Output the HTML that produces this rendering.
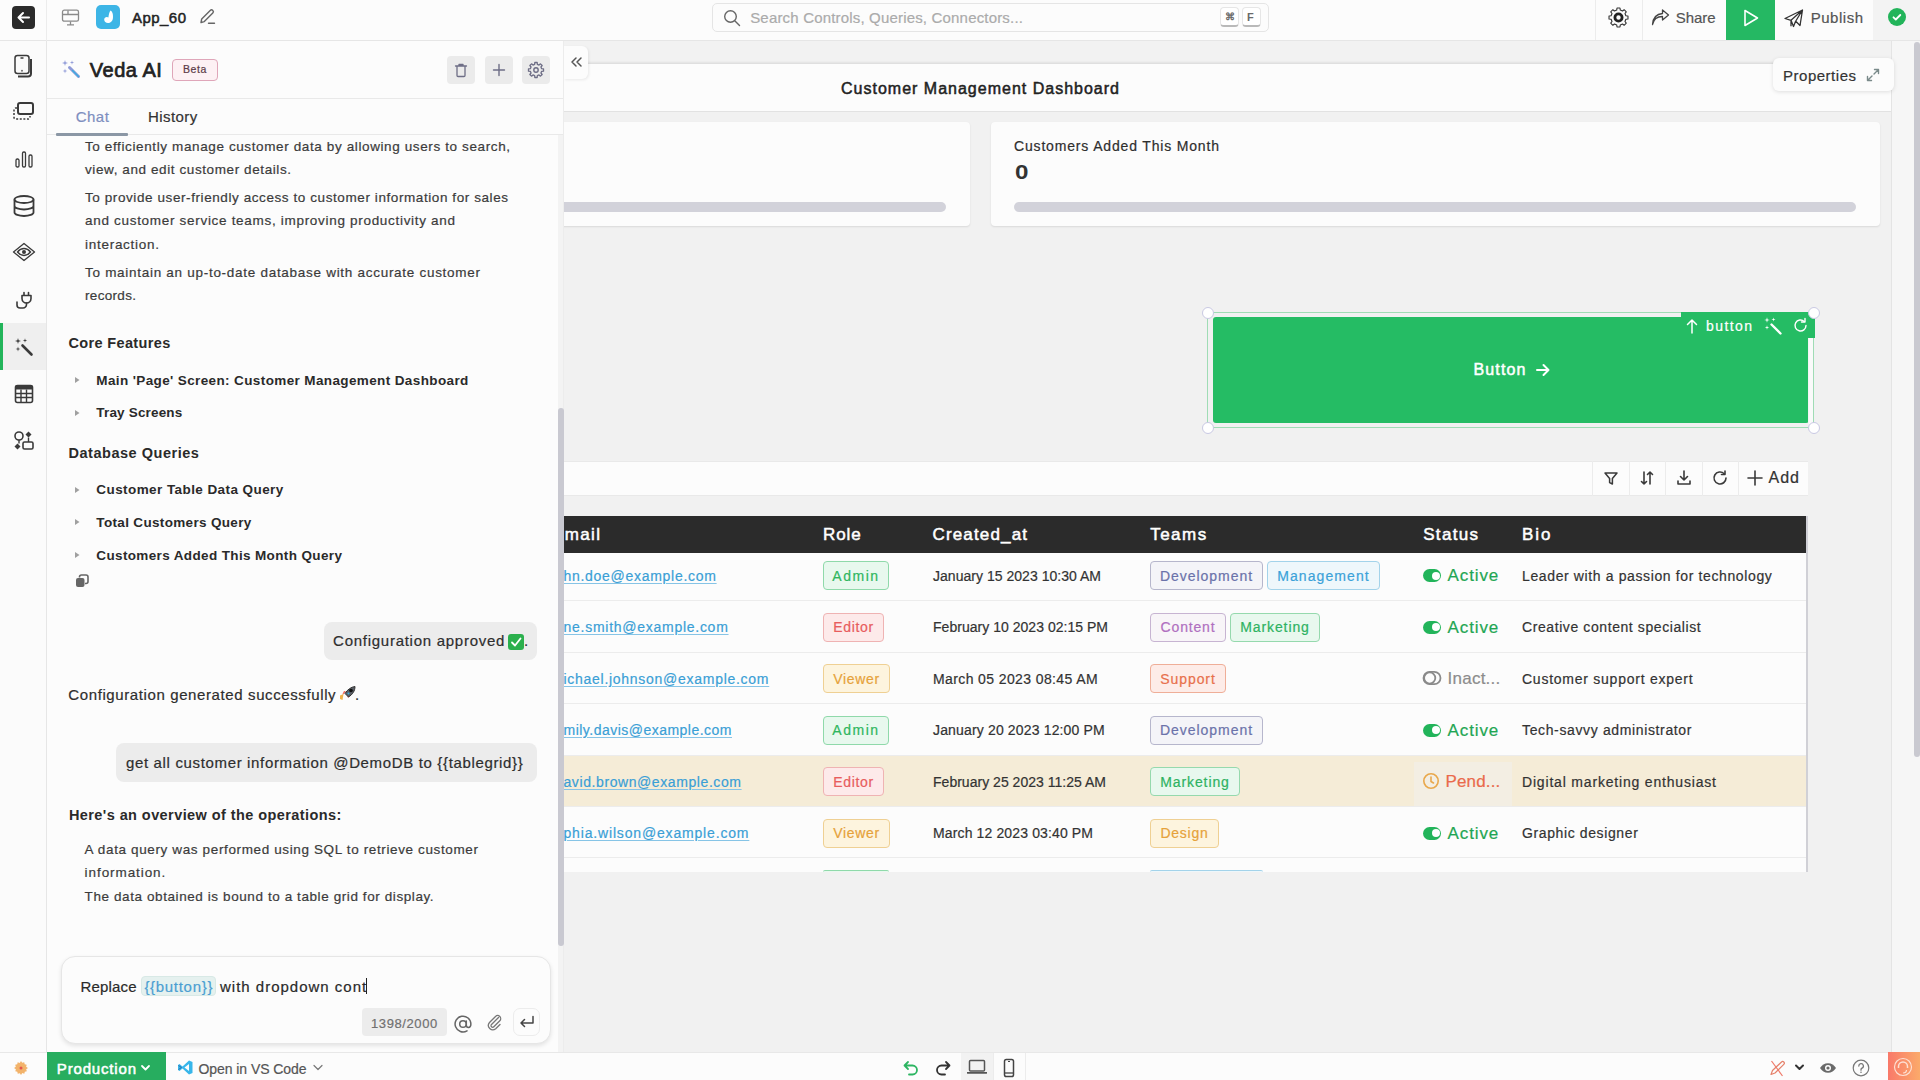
<!DOCTYPE html>
<html><head><meta charset="utf-8"><style>
*{box-sizing:border-box;margin:0;padding:0}
html,body{width:1920px;height:1080px;overflow:hidden;background:#f2f2f2;font-family:"Liberation Sans", sans-serif}
.t{position:absolute;line-height:1;white-space:nowrap}
.s{-webkit-text-stroke:0.2px currentColor}
.s5{-webkit-text-stroke:0.5px currentColor}
.s6{-webkit-text-stroke:0.7px currentColor}
.r{position:absolute}
</style></head><body>
<div class="r" style="left:440px;top:40px;width:1480px;height:1012px;background:#f2f2f2"></div><div class="r" style="left:440px;top:63.5px;width:1451px;height:989px;background:#f1f1f1;box-shadow:0 -1px 3px rgba(0,0,0,0.13)"></div><div class="r" style="left:440px;top:63.5px;width:1451px;height:48.5px;background:#fcfcfc;border-bottom:1px solid #e2e2e2"></div><div class="t s5" style="left:841px;top:80.66px;font-size:16px;font-weight:400;color:#222;letter-spacing:1.003px;">Customer Management Dashboard</div><div class="r" style="left:1891px;top:40px;width:29px;height:1012px;background:#f6f6f6;border-left:1px solid #e4e4e4"></div><div class="r" style="left:1914px;top:42px;width:6px;height:715px;background:#c9c9d0;border-radius:3px"></div><div class="r" style="left:440px;top:122px;width:530px;height:104px;background:#fcfcfc;border-radius:4px;box-shadow:0 1px 2px rgba(0,0,0,0.10)"></div><div class="r" style="left:440px;top:202px;width:506px;height:10px;background:#d2d2da;border-radius:5px"></div><div class="r" style="left:991px;top:122px;width:889px;height:104px;background:#fcfcfc;border-radius:4px;box-shadow:0 1px 2px rgba(0,0,0,0.10)"></div><div class="t s" style="left:1014px;top:138.75px;font-size:14px;font-weight:400;color:#2e2e2e;letter-spacing:0.833px;">Customers Added This Month</div><div class="t " style="left:1014.5px;top:162.05px;font-size:20.5px;font-weight:700;color:#333;letter-spacing:0px;transform:scaleX(1.18);transform-origin:0 0">0</div><div class="r" style="left:1014px;top:202px;width:842px;height:10px;background:#d2d2da;border-radius:5px"></div><div class="r" style="left:1207px;top:312px;width:607px;height:116px;border:1px solid #9fdcb5"></div><div class="r" style="left:1213px;top:317px;width:596px;height:106px;background:#25bc64;border-radius:3px"></div><div class="r" style="left:1681px;top:312px;width:134px;height:26px;background:#25bc64"></div><div class="r" style="left:1808px;top:338px;width:6px;height:86px;background:#f4f4f4"></div><div class="r" style="left:1809px;top:338px;width:5px;height:86px;background:#fafafa;border-right:1px solid #9fdcb5"></div><div class="t s5" style="left:1473.5px;top:362.06px;font-size:16px;font-weight:400;color:#fff;letter-spacing:1.148px;">Button</div><svg class="r" style="left:1535px;top:362px;" width="16" height="16" viewBox="0 0 16 16" fill="none"><path d="M2 8h11.5M8.5 3l5 5-5 5" stroke="#fff" stroke-width="2" stroke-linecap="round" stroke-linejoin="round"/></svg><svg class="r" style="left:1686px;top:318px;" width="12" height="16" viewBox="0 0 12 16" fill="none"><path d="M6 15V2M1.5 6.5L6 2l4.5 4.5" stroke="#fff" stroke-width="1.5" stroke-linecap="round" stroke-linejoin="round"/></svg><div class="t s" style="left:1706px;top:318.65px;font-size:14px;font-weight:400;color:#fff;letter-spacing:1.415px;">button</div><svg class="r" style="left:1763px;top:316px;" width="20" height="20" viewBox="0 0 20 20" fill="none"><path d="M8.5 8.5l9 9" stroke="#fff" stroke-width="2.4" stroke-linecap="round"/><path d="M4 1.2000000000000002L4.616 3.384L6.8 4L4.616 4.616L4 6.8L3.384 4.616L1.2000000000000002 4L3.384 3.384ZM10.5 1.5L10.94 3.06L12.5 3.5L10.94 3.94L10.5 5.5L10.06 3.94L8.5 3.5L10.06 3.06ZM4 9.3L4.484 11.016L6.2 11.5L4.484 11.984L4 13.7L3.516 11.984L1.7999999999999998 11.5L3.516 11.016Z" fill="#fff"/></svg><svg class="r" style="left:1792px;top:317px;" width="17" height="17" viewBox="0 0 17 17" fill="none"><path d="M14 8.5A5.5 5.5 0 1 1 12.2 4.4" stroke="#fff" stroke-width="1.4" stroke-linecap="round"/><path d="M13 1.5v3.5h-3.5" stroke="#fff" stroke-width="1.4" stroke-linecap="round" stroke-linejoin="round"/></svg><div class="r" style="left:1201.5px;top:306.5px;width:12px;height:12px;background:#fff;border:1px solid #c9c9e3;border-radius:50%"></div><div class="r" style="left:1201.5px;top:421.5px;width:12px;height:12px;background:#fff;border:1px solid #c9c9e3;border-radius:50%"></div><div class="r" style="left:1808px;top:306.5px;width:12px;height:12px;background:#fff;border:1px solid #c9c9e3;border-radius:50%"></div><div class="r" style="left:1808px;top:421.5px;width:12px;height:12px;background:#fff;border:1px solid #c9c9e3;border-radius:50%"></div><div class="r" style="left:440px;top:461px;width:1368px;height:35px;background:#fcfcfc;border-top:1px solid #e9e9e9;border-bottom:1px solid #e9e9e9"></div><div class="r" style="left:1592px;top:461px;width:1px;height:35px;background:#ececec"></div><div class="r" style="left:1629px;top:461px;width:1px;height:35px;background:#ececec"></div><div class="r" style="left:1665px;top:461px;width:1px;height:35px;background:#ececec"></div><div class="r" style="left:1702px;top:461px;width:1px;height:35px;background:#ececec"></div><div class="r" style="left:1738px;top:461px;width:1px;height:35px;background:#ececec"></div><svg class="r" style="left:1602px;top:469px;" width="18" height="18" viewBox="0 0 18 18" fill="none"><path d="M3 4h12l-4.6 5.6V15l-2.8-1.4V9.6z" stroke="#3a3a3a" stroke-width="1.5" stroke-linejoin="round"/></svg><svg class="r" style="left:1638px;top:469px;" width="18" height="18" viewBox="0 0 18 18" fill="none"><path d="M6 3v12M3.5 12.5L6 15l2.5-2.5M12 15V3M9.5 5.5L12 3l2.5 2.5" stroke="#3a3a3a" stroke-width="1.6" stroke-linecap="round" stroke-linejoin="round"/></svg><svg class="r" style="left:1675px;top:469px;" width="18" height="18" viewBox="0 0 18 18" fill="none"><path d="M9 2v9M5.5 7.5L9 11l3.5-3.5M3 12v3h12v-3" stroke="#3a3a3a" stroke-width="1.6" stroke-linecap="round" stroke-linejoin="round"/></svg><svg class="r" style="left:1711px;top:469px;" width="18" height="18" viewBox="0 0 18 18" fill="none"><path d="M15 9a6 6 0 1 1-1.8-4.3" stroke="#3a3a3a" stroke-width="1.6" stroke-linecap="round"/><path d="M14 2v3.5h-3.5" stroke="#3a3a3a" stroke-width="1.6" stroke-linecap="round" stroke-linejoin="round"/></svg><svg class="r" style="left:1746px;top:469px;" width="18" height="18" viewBox="0 0 18 18" fill="none"><path d="M9 2v14M2 9h14" stroke="#3a3a3a" stroke-width="1.6" stroke-linecap="round"/></svg><div class="t s" style="left:1768.5px;top:470.46px;font-size:16px;font-weight:400;color:#333;letter-spacing:1.016px;">Add</div><div class="r" style="left:440px;top:516px;width:1368px;height:356px;background:#fcfcfc"></div><div class="r" style="left:440px;top:516px;width:1366px;height:37px;background:#2b2b2b"></div><div class="r" style="left:1806px;top:516px;width:2px;height:356px;background:#d0d0d6"></div><div class="t s5" style="left:552px;top:526.41px;font-size:17px;font-weight:400;color:#fff;letter-spacing:1.373px;">Email</div><div class="t s5" style="left:823px;top:526.41px;font-size:17px;font-weight:400;color:#fff;letter-spacing:0.946px;">Role</div><div class="t s5" style="left:932.5px;top:526.41px;font-size:17px;font-weight:400;color:#fff;letter-spacing:1.154px;">Created_at</div><div class="t s5" style="left:1150.2px;top:526.41px;font-size:17px;font-weight:400;color:#fff;letter-spacing:1.482px;">Teams</div><div class="t s5" style="left:1423.2px;top:526.41px;font-size:17px;font-weight:400;color:#fff;letter-spacing:1.321px;">Status</div><div class="t s5" style="left:1522px;top:526.41px;font-size:17px;font-weight:400;color:#fff;letter-spacing:1.915px;">Bio</div><div class="r" style="left:440px;top:600.4px;width:1366px;height:1px;background:#ececec"></div><div class="t s" style="left:563.5px;top:568.95px;font-size:14px;font-weight:400;color:#3a9fd6;letter-spacing:0.713px;text-decoration:underline;text-underline-offset:2px;text-decoration-color:#86c4e6">hn.doe@example.com</div><div class="r" style="left:823px;top:561.3px;width:66px;height:29px;background:#e8f8ee;border:1px solid #8fd9aa;border-radius:4px"></div><div class="t s" style="left:823px;top:568.95px;font-size:14px;font-weight:400;color:#2fb65e;letter-spacing:1.529px;width:66px;text-align:center">Admin</div><div class="t s" style="left:933px;top:568.95px;font-size:14px;font-weight:400;color:#333;letter-spacing:0.029px;">January 15 2023 10:30 AM</div><div class="r" style="left:1150px;top:561.3px;width:113px;height:29px;background:#f4f4f8;border:1px solid #b6b6cc;border-radius:4px"></div><div class="t s" style="left:1150px;top:568.95px;font-size:14px;font-weight:400;color:#6b72aa;letter-spacing:0.951px;width:113px;text-align:center">Development</div><div class="r" style="left:1267px;top:561.3px;width:113px;height:29px;background:#eef7fb;border:1px solid #a3d3ea;border-radius:4px"></div><div class="t s" style="left:1267px;top:568.95px;font-size:14px;font-weight:400;color:#3ba2d9;letter-spacing:1.087px;width:113px;text-align:center">Management</div><div class="r" style="left:1423px;top:569.3px;width:18px;height:13px;background:#22b45a;border-radius:7px"></div><div class="r" style="left:1432px;top:571.8px;width:8px;height:8px;background:#fff;border-radius:50%"></div><div class="t s" style="left:1447.5px;top:567.41px;font-size:17px;font-weight:400;color:#1fa653;letter-spacing:0.901px;">Active</div><div class="t s" style="left:1522px;top:568.95px;font-size:14px;font-weight:400;color:#333;letter-spacing:0.622px;">Leader with a passion for technology</div><div class="r" style="left:440px;top:651.8px;width:1366px;height:1px;background:#ececec"></div><div class="t s" style="left:563.5px;top:620.15px;font-size:14px;font-weight:400;color:#3a9fd6;letter-spacing:0.733px;text-decoration:underline;text-underline-offset:2px;text-decoration-color:#86c4e6">ne.smith@example.com</div><div class="r" style="left:823px;top:612.5px;width:61px;height:29px;background:#fdeaea;border:1px solid #efb3b3;border-radius:4px"></div><div class="t s" style="left:823px;top:620.15px;font-size:14px;font-weight:400;color:#e85d5d;letter-spacing:0.645px;width:61px;text-align:center">Editor</div><div class="t s" style="left:933px;top:620.15px;font-size:14px;font-weight:400;color:#333;letter-spacing:0.028px;">February 10 2023 02:15 PM</div><div class="r" style="left:1150px;top:612.5px;width:76px;height:29px;background:#f8f5f8;border:1px solid #c7b4d2;border-radius:4px"></div><div class="t s" style="left:1150px;top:620.15px;font-size:14px;font-weight:400;color:#b06fc0;letter-spacing:0.828px;width:76px;text-align:center">Content</div><div class="r" style="left:1230px;top:612.5px;width:90px;height:29px;background:#e8f8ee;border:1px solid #95d9ad;border-radius:4px"></div><div class="t s" style="left:1230px;top:620.15px;font-size:14px;font-weight:400;color:#2eb262;letter-spacing:0.904px;width:90px;text-align:center">Marketing</div><div class="r" style="left:1423px;top:620.5px;width:18px;height:13px;background:#22b45a;border-radius:7px"></div><div class="r" style="left:1432px;top:623.0px;width:8px;height:8px;background:#fff;border-radius:50%"></div><div class="t s" style="left:1447.5px;top:618.61px;font-size:17px;font-weight:400;color:#1fa653;letter-spacing:0.901px;">Active</div><div class="t s" style="left:1522px;top:620.15px;font-size:14px;font-weight:400;color:#333;letter-spacing:0.588px;">Creative content specialist</div><div class="r" style="left:440px;top:703.2px;width:1366px;height:1px;background:#ececec"></div><div class="t s" style="left:563.5px;top:671.65px;font-size:14px;font-weight:400;color:#3a9fd6;letter-spacing:0.721px;text-decoration:underline;text-underline-offset:2px;text-decoration-color:#86c4e6">ichael.johnson@example.com</div><div class="r" style="left:823px;top:664.0px;width:67px;height:29px;background:#fdf4de;border:1px solid #efd093;border-radius:4px"></div><div class="t s" style="left:823px;top:671.65px;font-size:14px;font-weight:400;color:#e6a23a;letter-spacing:0.692px;width:67px;text-align:center">Viewer</div><div class="t s" style="left:933px;top:671.65px;font-size:14px;font-weight:400;color:#333;letter-spacing:0.389px;">March 05 2023 08:45 AM</div><div class="r" style="left:1150px;top:664.0px;width:76px;height:29px;background:#fdece8;border:1px solid #efae98;border-radius:4px"></div><div class="t s" style="left:1150px;top:671.65px;font-size:14px;font-weight:400;color:#e8704c;letter-spacing:0.928px;width:76px;text-align:center">Support</div><svg class="r" style="left:1422px;top:669.5px;" width="20" height="16" viewBox="0 0 20 16" fill="none"><rect x="1.5" y="1.8" width="17" height="12.4" rx="6.2" stroke="#8a8a8a" stroke-width="1.8"/><circle cx="7.7" cy="8" r="5.6" stroke="#8a8a8a" stroke-width="1.8"/></svg><div class="t s" style="left:1447.5px;top:670.11px;font-size:17px;font-weight:400;color:#8c8c8c;letter-spacing:0.253px;">Inact...</div><div class="t s" style="left:1522px;top:671.65px;font-size:14px;font-weight:400;color:#333;letter-spacing:0.751px;">Customer support expert</div><div class="r" style="left:440px;top:754.6px;width:1366px;height:1px;background:#ececec"></div><div class="t s" style="left:563.5px;top:723.15px;font-size:14px;font-weight:400;color:#3a9fd6;letter-spacing:0.482px;text-decoration:underline;text-underline-offset:2px;text-decoration-color:#86c4e6">mily.davis@example.com</div><div class="r" style="left:823px;top:715.5px;width:66px;height:29px;background:#e8f8ee;border:1px solid #8fd9aa;border-radius:4px"></div><div class="t s" style="left:823px;top:723.15px;font-size:14px;font-weight:400;color:#2fb65e;letter-spacing:1.529px;width:66px;text-align:center">Admin</div><div class="t s" style="left:933px;top:723.15px;font-size:14px;font-weight:400;color:#333;letter-spacing:0.156px;">January 20 2023 12:00 PM</div><div class="r" style="left:1150px;top:715.5px;width:113px;height:29px;background:#f4f4f8;border:1px solid #b6b6cc;border-radius:4px"></div><div class="t s" style="left:1150px;top:723.15px;font-size:14px;font-weight:400;color:#6b72aa;letter-spacing:0.951px;width:113px;text-align:center">Development</div><div class="r" style="left:1423px;top:723.5px;width:18px;height:13px;background:#22b45a;border-radius:7px"></div><div class="r" style="left:1432px;top:726.0px;width:8px;height:8px;background:#fff;border-radius:50%"></div><div class="t s" style="left:1447.5px;top:721.61px;font-size:17px;font-weight:400;color:#1fa653;letter-spacing:0.901px;">Active</div><div class="t s" style="left:1522px;top:723.15px;font-size:14px;font-weight:400;color:#333;letter-spacing:0.634px;">Tech-savvy administrator</div><div class="r" style="left:440px;top:755.6px;width:1366px;height:51.39999999999998px;background:#f5ecd7"></div><div class="r" style="left:1414px;top:761.6px;width:98px;height:45.39999999999998px;background:#f3eee3"></div><div class="r" style="left:440px;top:806.0px;width:1366px;height:1px;background:#ececec"></div><div class="t s" style="left:563.5px;top:774.55px;font-size:14px;font-weight:400;color:#3a9fd6;letter-spacing:0.587px;text-decoration:underline;text-underline-offset:2px;text-decoration-color:#86c4e6">avid.brown@example.com</div><div class="r" style="left:823px;top:766.9px;width:61px;height:29px;background:#fdeaea;border:1px solid #efb3b3;border-radius:4px"></div><div class="t s" style="left:823px;top:774.55px;font-size:14px;font-weight:400;color:#e85d5d;letter-spacing:0.645px;width:61px;text-align:center">Editor</div><div class="t s" style="left:933px;top:774.55px;font-size:14px;font-weight:400;color:#333;letter-spacing:0.02px;">February 25 2023 11:25 AM</div><div class="r" style="left:1150px;top:766.9px;width:90px;height:29px;background:#e8f8ee;border:1px solid #95d9ad;border-radius:4px"></div><div class="t s" style="left:1150px;top:774.55px;font-size:14px;font-weight:400;color:#2eb262;letter-spacing:0.904px;width:90px;text-align:center">Marketing</div><svg class="r" style="left:1422px;top:772.4px;" width="18" height="18" viewBox="0 0 18 18" fill="none"><circle cx="9" cy="9" r="7.2" stroke="#e9a84c" stroke-width="1.6"/><path d="M9 5v4.5l2.5 1.5" stroke="#e9a84c" stroke-width="1.6" stroke-linecap="round"/></svg><div class="t s" style="left:1445.5px;top:773.01px;font-size:17px;font-weight:400;color:#ea6a4c;letter-spacing:0.154px;">Pend...</div><div class="t s" style="left:1522px;top:774.55px;font-size:14px;font-weight:400;color:#333;letter-spacing:0.816px;">Digital marketing enthusiast</div><div class="r" style="left:440px;top:857.4px;width:1366px;height:1px;background:#ececec"></div><div class="t s" style="left:563.5px;top:826.15px;font-size:14px;font-weight:400;color:#3a9fd6;letter-spacing:0.831px;text-decoration:underline;text-underline-offset:2px;text-decoration-color:#86c4e6">phia.wilson@example.com</div><div class="r" style="left:823px;top:818.5px;width:67px;height:29px;background:#fdf4de;border:1px solid #efd093;border-radius:4px"></div><div class="t s" style="left:823px;top:826.15px;font-size:14px;font-weight:400;color:#e6a23a;letter-spacing:0.692px;width:67px;text-align:center">Viewer</div><div class="t s" style="left:933px;top:826.15px;font-size:14px;font-weight:400;color:#333;letter-spacing:0.133px;">March 12 2023 03:40 PM</div><div class="r" style="left:1150px;top:818.5px;width:69px;height:29px;background:#fdf4de;border:1px solid #efd093;border-radius:4px"></div><div class="t s" style="left:1150px;top:826.15px;font-size:14px;font-weight:400;color:#e6a23a;letter-spacing:0.744px;width:69px;text-align:center">Design</div><div class="r" style="left:1423px;top:826.5px;width:18px;height:13px;background:#22b45a;border-radius:7px"></div><div class="r" style="left:1432px;top:829.0px;width:8px;height:8px;background:#fff;border-radius:50%"></div><div class="t s" style="left:1447.5px;top:824.61px;font-size:17px;font-weight:400;color:#1fa653;letter-spacing:0.901px;">Active</div><div class="t s" style="left:1522px;top:826.15px;font-size:14px;font-weight:400;color:#333;letter-spacing:0.613px;">Graphic designer</div><div class="r" style="left:823px;top:870px;width:66px;height:2px;background:#e8f8ee;border-top:1px solid #8fd9aa;border-radius:4px 4px 0 0"></div><div class="r" style="left:1150px;top:870px;width:113px;height:2px;background:#eef7fb;border-top:1px solid #a3d3ea;border-radius:4px 4px 0 0"></div><div class="r" style="left:1773px;top:58px;width:121px;height:33px;background:#fcfcfc;border-radius:6px;box-shadow:0 1px 4px rgba(0,0,0,0.12)"></div><div class="t s" style="left:1783px;top:67.80px;font-size:15px;font-weight:400;color:#333;letter-spacing:0.515px;">Properties</div><svg class="r" style="left:1865px;top:67px;" width="16" height="16" viewBox="0 0 16 16" fill="none"><path d="M9.5 2.5h4v4M13.5 2.5L9 7M6.5 13.5h-4v-4M2.5 13.5L7 9" stroke="#7a8a8a" stroke-width="1.4" stroke-linecap="round" stroke-linejoin="round"/></svg><div class="r" style="left:564px;top:46px;width:24px;height:33px;background:#fcfcfc;border-radius:0 6px 6px 0;box-shadow:1px 1px 3px rgba(0,0,0,0.08)"></div><svg class="r" style="left:569px;top:55px;" width="14" height="14" viewBox="0 0 14 14" fill="none"><path d="M7 3L3 7l4 4M12 3L8 7l4 4" stroke="#555" stroke-width="1.5" stroke-linecap="round" stroke-linejoin="round"/></svg><div class="r" style="left:47px;top:41px;width:517px;height:1011px;background:#fcfcfc;border-right:1px solid #ececec"></div><div class="r" style="left:47px;top:98px;width:516px;height:1px;background:#e9e9e9"></div><div class="r" style="left:47px;top:134px;width:516px;height:1px;background:#e9e9e9"></div><div class="r" style="left:56px;top:133px;width:72px;height:3px;background:#8b97a5;border-radius:1px"></div><svg class="r" style="left:61px;top:59px;" width="20" height="20" viewBox="0 0 20 20" fill="none"><path d="M8.5 8.5l9 9" stroke="#8f9ad8" stroke-width="3" stroke-linecap="round"/><path d="M11.5 11.5l6 6" stroke="#3aaee0" stroke-width="1.4" stroke-linecap="round"/><path d="M4 1L4.66 3.34L7 4L4.66 4.66L4 7L3.34 4.66L1 4L3.34 3.34ZM11 1.2999999999999998L11.484 3.016L13.2 3.5L11.484 3.984L11 5.7L10.516 3.984L8.8 3.5L10.516 3.016ZM4 9.6L4.5280000000000005 11.472L6.4 12L4.5280000000000005 12.528L4 14.4L3.472 12.528L1.6 12L3.472 11.472Z" fill="#8f9ad8"/></svg><div class="t s6" style="left:89.8px;top:59.97px;font-size:20px;font-weight:400;color:#222;letter-spacing:0.507px;">Veda AI</div><div class="r" style="left:172px;top:59px;width:46px;height:22px;background:#fdf1f4;border:1px solid #dfa6b9;border-radius:4px"></div><div class="t s" style="left:172px;top:64.31px;font-size:10.5px;font-weight:400;color:#5b3b47;letter-spacing:0.633px;width:46px;text-align:center">Beta</div><div class="r" style="left:447px;top:56px;width:28px;height:28px;background:#ebebeb;border-radius:4px"></div><div class="r" style="left:485px;top:56px;width:28px;height:28px;background:#ebebeb;border-radius:4px"></div><div class="r" style="left:522px;top:56px;width:28px;height:28px;background:#ebebeb;border-radius:4px"></div><svg class="r" style="left:453px;top:62px;" width="16" height="16" viewBox="0 0 16 16" fill="none"><path d="M2.5 4h11M6 4V2.5h4V4M4 4v9.5a1 1 0 0 0 1 1h6a1 1 0 0 0 1-1V4" stroke="#6e6e86" stroke-width="1.3" stroke-linecap="round" stroke-linejoin="round"/></svg><svg class="r" style="left:491px;top:62px;" width="16" height="16" viewBox="0 0 16 16" fill="none"><path d="M8 2.5v11M2.5 8h11" stroke="#6e6e86" stroke-width="1.4" stroke-linecap="round"/></svg><svg class="r" style="left:527px;top:61px;" width="18" height="18" viewBox="0 0 18 18" fill="none"><path d="M7.65 3.36 L7.81 1.49 L10.19 1.49 L10.35 3.36 L12.03 4.05 L13.47 2.85 L15.15 4.53 L13.95 5.97 L14.64 7.65 L16.51 7.81 L16.51 10.19 L14.64 10.35 L13.95 12.03 L15.15 13.47 L13.47 15.15 L12.03 13.95 L10.35 14.64 L10.19 16.51 L7.81 16.51 L7.65 14.64 L5.97 13.95 L4.53 15.15 L2.85 13.47 L4.05 12.03 L3.36 10.35 L1.49 10.19 L1.49 7.81 L3.36 7.65 L4.05 5.97 L2.85 4.53 L4.53 2.85 L5.97 4.05Z" stroke="#6e6e86" stroke-width="1.3" stroke-linejoin="round"/><circle cx="9" cy="9" r="2.2" stroke="#6e6e86" stroke-width="1.4"/></svg><div class="t s" style="left:75.8px;top:109.10px;font-size:15px;font-weight:400;color:#7f8fbf;letter-spacing:0.439px;">Chat</div><div class="t s" style="left:148px;top:109.10px;font-size:15px;font-weight:400;color:#333;letter-spacing:0.438px;">History</div><div class="t s" style="left:85px;top:139.77px;font-size:13.5px;font-weight:400;color:#3b3b3b;letter-spacing:0.616px;">To efficiently manage customer data by allowing users to search,</div><div class="t s" style="left:85px;top:163.27px;font-size:13.5px;font-weight:400;color:#3b3b3b;letter-spacing:0.594px;">view, and edit customer details.</div><div class="t s" style="left:85px;top:190.87px;font-size:13.5px;font-weight:400;color:#3b3b3b;letter-spacing:0.584px;">To provide user-friendly access to customer information for sales</div><div class="t s" style="left:85px;top:214.37px;font-size:13.5px;font-weight:400;color:#3b3b3b;letter-spacing:0.696px;">and customer service teams, improving productivity and</div><div class="t s" style="left:85px;top:237.87px;font-size:13.5px;font-weight:400;color:#3b3b3b;letter-spacing:0.724px;">interaction.</div><div class="t s" style="left:85px;top:265.57px;font-size:13.5px;font-weight:400;color:#3b3b3b;letter-spacing:0.715px;">To maintain an up-to-date database with accurate customer</div><div class="t s" style="left:85px;top:289.07px;font-size:13.5px;font-weight:400;color:#3b3b3b;letter-spacing:0.319px;">records.</div><div class="t " style="left:68.5px;top:335.73px;font-size:14.5px;font-weight:700;color:#2a2a2a;letter-spacing:0.349px;">Core Features</div><div class="t " style="left:68.5px;top:445.53px;font-size:14.5px;font-weight:700;color:#2a2a2a;letter-spacing:0.526px;">Database Queries</div><svg class="r" style="left:74px;top:376.3px;" width="6" height="8" viewBox="0 0 6 8" fill="none"><path d="M1 1l4.5 3L1 7z" fill="#a0a0a0"/></svg><div class="t " style="left:96.3px;top:373.87px;font-size:13.5px;font-weight:700;color:#2a2a2a;letter-spacing:0.38px;">Main 'Page' Screen: Customer Management Dashboard</div><svg class="r" style="left:74px;top:408.9px;" width="6" height="8" viewBox="0 0 6 8" fill="none"><path d="M1 1l4.5 3L1 7z" fill="#a0a0a0"/></svg><div class="t " style="left:96.3px;top:406.47px;font-size:13.5px;font-weight:700;color:#2a2a2a;letter-spacing:0.177px;">Tray Screens</div><svg class="r" style="left:74px;top:485.7px;" width="6" height="8" viewBox="0 0 6 8" fill="none"><path d="M1 1l4.5 3L1 7z" fill="#a0a0a0"/></svg><div class="t " style="left:96.3px;top:483.27px;font-size:13.5px;font-weight:700;color:#2a2a2a;letter-spacing:0.425px;">Customer Table Data Query</div><svg class="r" style="left:74px;top:518.3px;" width="6" height="8" viewBox="0 0 6 8" fill="none"><path d="M1 1l4.5 3L1 7z" fill="#a0a0a0"/></svg><div class="t " style="left:96.3px;top:515.87px;font-size:13.5px;font-weight:700;color:#2a2a2a;letter-spacing:0.336px;">Total Customers Query</div><svg class="r" style="left:74px;top:551.4px;" width="6" height="8" viewBox="0 0 6 8" fill="none"><path d="M1 1l4.5 3L1 7z" fill="#a0a0a0"/></svg><div class="t " style="left:96.3px;top:548.97px;font-size:13.5px;font-weight:700;color:#2a2a2a;letter-spacing:0.366px;">Customers Added This Month Query</div><svg class="r" style="left:75px;top:574px;" width="14" height="14" viewBox="0 0 14 14" fill="none"><rect x="1" y="4" width="8.5" height="9" rx="2" fill="#666"/><path d="M4.5 3.5V3a2 2 0 0 1 2-2h4.5a2 2 0 0 1 2 2v4.5a2 2 0 0 1-2 2H10" stroke="#666" stroke-width="1.6"/></svg><div class="r" style="left:324px;top:622px;width:213px;height:38px;background:#ececec;border-radius:8px"></div><div class="t s" style="left:333.1px;top:633.30px;font-size:15px;font-weight:400;color:#2e2e2e;letter-spacing:0.731px;">Configuration approved</div><div class="r" style="left:508px;top:634px;width:16px;height:16px;background:#2bb04d;border-radius:3px"></div><svg class="r" style="left:508px;top:634px;" width="16" height="16" viewBox="0 0 16 16" fill="none"><path d="M4 8.5l3 3 5.5-7" stroke="#fff" stroke-width="1.8" stroke-linecap="round" stroke-linejoin="round"/></svg><div class="t s" style="left:524px;top:633.30px;font-size:15px;font-weight:400;color:#2e2e2e;letter-spacing:0px;">.</div><div class="t s" style="left:68.3px;top:686.80px;font-size:15px;font-weight:400;color:#2e2e2e;letter-spacing:0.609px;">Configuration generated successfully</div><svg class="r" style="left:339px;top:685px;" width="18" height="18" viewBox="0 0 18 18" fill="none"><path d="M1 10.5l3.5-1.5-1 6-2.5-1z" fill="#f0b14a"/><path d="M4 9.5L7 6.5 5 6 3.5 9z" fill="#f06050"/><path d="M8.5 11L11.5 8l.5 2-3 3z" fill="#f06050"/><path d="M16 1.5C12 2 8.5 4.5 6 8.5l3.5 3.5C13.5 9.5 16 6 16 1.5z" fill="#5a5f66" stroke="#333" stroke-width="1"/><circle cx="12" cy="5.5" r="1.8" fill="#111"/><circle cx="9.5" cy="8.5" r="1" fill="#3ab0e0"/></svg><div class="t s" style="left:355px;top:686.80px;font-size:15px;font-weight:400;color:#2e2e2e;letter-spacing:0px;">.</div><div class="r" style="left:116px;top:743px;width:421px;height:39px;background:#ececec;border-radius:8px"></div><div class="t s" style="left:126px;top:754.80px;font-size:15px;font-weight:400;color:#2e2e2e;letter-spacing:0.65px;">get all customer information @DemoDB to {{tablegrid}}</div><div class="t " style="left:68.9px;top:807.53px;font-size:14.5px;font-weight:700;color:#2a2a2a;letter-spacing:0.423px;">Here's an overview of the operations:</div><div class="t s" style="left:84.6px;top:843.17px;font-size:13.5px;font-weight:400;color:#3b3b3b;letter-spacing:0.629px;">A data query was performed using SQL to retrieve customer</div><div class="t s" style="left:84.6px;top:866.47px;font-size:13.5px;font-weight:400;color:#3b3b3b;letter-spacing:0.925px;">information.</div><div class="t s" style="left:84.6px;top:889.97px;font-size:13.5px;font-weight:400;color:#3b3b3b;letter-spacing:0.589px;">The data obtained is bound to a table grid for display.</div><div class="r" style="left:558px;top:135px;width:5px;height:917px;background:#f3f3f3"></div><div class="r" style="left:558px;top:408px;width:6px;height:538px;background:#c9c9d1;border-radius:3px"></div><div class="r" style="left:61px;top:956px;width:490px;height:88px;background:#fcfcfc;border:1px solid #e6e6e6;border-radius:14px;box-shadow:0 2px 4px rgba(0,0,0,0.10)"></div><div class="t s" style="left:80.4px;top:978.80px;font-size:15px;font-weight:400;color:#2a2a2a;letter-spacing:0.194px;">Replace</div><div class="r" style="left:141px;top:975.5px;width:75px;height:20px;background:#e5f1ef;border:1px solid #d8e9e6;border-radius:4px"></div><div class="t s" style="left:144.4px;top:978.80px;font-size:15px;font-weight:400;color:#4b9fd2;letter-spacing:0.695px;">{{button}}</div><div class="t s" style="left:220px;top:978.80px;font-size:15px;font-weight:400;color:#2a2a2a;letter-spacing:0.998px;">with dropdown cont</div><div class="r" style="left:366px;top:978px;width:1px;height:16px;background:#222"></div><div class="r" style="left:362px;top:1008px;width:85px;height:28px;background:#ececec;border-radius:4px"></div><div class="t s" style="left:371px;top:1016.50px;font-size:13px;font-weight:400;color:#707070;letter-spacing:0.594px;">1398/2000</div><svg class="r" style="left:453px;top:1014px;" width="20" height="20" viewBox="0 0 20 20" fill="none"><circle cx="10" cy="10" r="3.3" stroke="#666" stroke-width="1.5"/><path d="M13.3 7v4.2c0 1.4 1 2.2 2.2 2.2 1.6 0 2.4-1.6 2.4-3.4A7.9 7.9 0 1 0 14 16.9" stroke="#666" stroke-width="1.5" stroke-linecap="round"/></svg><svg class="r" style="left:485px;top:1013px;" width="18" height="18" viewBox="0 0 18 18" fill="none"><path d="M13.5 4.5L6.5 11.5a1.6 1.6 0 0 0 2.3 2.3l6-6a3 3 0 0 0-4.3-4.3L4.5 9.5a4.4 4.4 0 0 0 6.2 6.2L15 11.5" stroke="#777" stroke-width="1.3" stroke-linecap="round"/></svg><div class="r" style="left:513px;top:1008px;width:27px;height:28px;background:#fcfcfc;border:1px solid #ececec;border-radius:7px"></div><svg class="r" style="left:518px;top:1014px;" width="18" height="16" viewBox="0 0 18 16" fill="none"><path d="M15 2.5v6.5H3M6.5 5.5L3 9l3.5 3.5" stroke="#444" stroke-width="1.5" stroke-linecap="round" stroke-linejoin="round"/></svg><div class="r" style="left:0px;top:41px;width:47px;height:1011px;background:#fbfbfb;border-right:1px solid #e6e6e6"></div><div class="r" style="left:3px;top:323px;width:43px;height:47px;background:#efefef"></div><div class="r" style="left:0px;top:323px;width:2.5px;height:47px;background:#22b45a"></div><svg class="r" style="left:13px;top:54px;" width="22" height="24" viewBox="0 0 22 24" fill="none"><rect x="2" y="1.5" width="14" height="18" rx="2.5" stroke="#3a3a3a" stroke-width="1.5"/><path d="M18 5v14.5a3 3 0 0 1-3 3H5" stroke="#3a3a3a" stroke-width="2"/><path d="M8 4h2M9 16.5v.5" stroke="#3a3a3a" stroke-width="1.4" stroke-linecap="round"/></svg><svg class="r" style="left:12px;top:101px;" width="24" height="20" viewBox="0 0 24 20" fill="none"><rect x="6" y="2" width="15" height="11" rx="2" stroke="#3a3a3a" stroke-width="2"/><path d="M5 7H3.5A1.5 1.5 0 0 0 2 8.5v8A1.5 1.5 0 0 0 3.5 18h13a1.5 1.5 0 0 0 1.5-1.5V15" stroke="#3a3a3a" stroke-width="1.5" stroke-dasharray="2 1.6"/></svg><svg class="r" style="left:14px;top:149px;" width="20" height="20" viewBox="0 0 20 20" fill="none"><rect x="2" y="10" width="3" height="8" rx="1.3" stroke="#3a3a3a" stroke-width="1.3"/><rect x="8.5" y="3" width="3" height="15" rx="1.3" stroke="#3a3a3a" stroke-width="1.3"/><rect x="15" y="6" width="3" height="12" rx="1.3" stroke="#3a3a3a" stroke-width="1.3"/></svg><svg class="r" style="left:12px;top:194px;" width="24" height="24" viewBox="0 0 24 24" fill="none"><ellipse cx="12" cy="5.5" rx="9.5" ry="3.5" stroke="#3a3a3a" stroke-width="1.8"/><path d="M2.5 5.5v13c0 1.9 4.3 3.5 9.5 3.5s9.5-1.6 9.5-3.5v-13M2.5 12c0 1.9 4.3 3.5 9.5 3.5s9.5-1.6 9.5-3.5" stroke="#3a3a3a" stroke-width="1.8"/></svg><svg class="r" style="left:12px;top:242px;" width="24" height="20" viewBox="0 0 24 20" fill="none"><path d="M12 1.5L22.5 10 12 18.5 1.5 10z" stroke="#3a3a3a" stroke-width="1.3" stroke-linejoin="round"/><path d="M5.5 10c2-2.5 4-3.5 6.5-3.5s4.5 1 6.5 3.5c-2 2.5-4 3.5-6.5 3.5s-4.5-1-6.5-3.5z" stroke="#3a3a3a" stroke-width="1.3"/><circle cx="12" cy="10" r="2" fill="#3a3a3a"/></svg><svg class="r" style="left:14px;top:289px;" width="20" height="22" viewBox="0 0 20 22" fill="none"><path d="M10 3.5v3M14.5 3.5v3M8 6.5h9v3a4.5 4.5 0 0 1-9 0z" stroke="#3a3a3a" stroke-width="1.6" stroke-linecap="round" stroke-linejoin="round"/><path d="M12.5 14v1.5a3.5 3.5 0 0 1-3.5 3.5H6a3 3 0 0 1-3-3V13" stroke="#3a3a3a" stroke-width="1.6" stroke-linecap="round"/></svg><svg class="r" style="left:14px;top:337px;" width="20" height="20" viewBox="0 0 20 20" fill="none"><path d="M8.5 8.5l9 9" stroke="#3a3a3a" stroke-width="2.6" stroke-linecap="round"/><path d="M4 1L4.66 3.34L7 4L4.66 4.66L4 7L3.34 4.66L1 4L3.34 3.34ZM11 1.2999999999999998L11.484 3.016L13.2 3.5L11.484 3.984L11 5.7L10.516 3.984L8.8 3.5L10.516 3.016ZM4 9.6L4.5280000000000005 11.472L6.4 12L4.5280000000000005 12.528L4 14.4L3.472 12.528L1.6 12L3.472 11.472Z" fill="#3a3a3a"/></svg><svg class="r" style="left:14px;top:384px;" width="20" height="20" viewBox="0 0 20 20" fill="none"><rect x="1.5" y="1.5" width="17" height="17" rx="2" stroke="#3a3a3a" stroke-width="1.6"/><path d="M1.5 1.5h17v4h-17z" fill="#3a3a3a"/><path d="M1.5 9.5h17M1.5 13.5h17M7 5.5v13M12.5 5.5v13" stroke="#3a3a3a" stroke-width="1.4"/></svg><svg class="r" style="left:13px;top:430px;" width="22" height="22" viewBox="0 0 22 22" fill="none"><circle cx="6" cy="6" r="4" stroke="#3a3a3a" stroke-width="1.6"/><path d="M15.5 1.5l3 3-3 3-3-3z" fill="#3a3a3a"/><rect x="10" y="12" width="10" height="7" rx="1.5" stroke="#3a3a3a" stroke-width="1.6"/><path d="M4.5 13.5l3 3-3 3-3-3z" fill="#3a3a3a"/><path d="M6 10v3.5M15.5 7.5V12" stroke="#3a3a3a" stroke-width="1.4"/></svg><div class="r" style="left:0px;top:0px;width:1920px;height:41px;background:#fcfcfc;border-bottom:1px solid #e6e6e6"></div><div class="r" style="left:46px;top:0px;width:1px;height:41px;background:#ececec"></div><div class="r" style="left:12px;top:6px;width:23px;height:23px;background:#2b2b2b;border-radius:4px"></div><svg class="r" style="left:12px;top:6px;" width="23" height="23" viewBox="0 0 23 23" fill="none"><path d="M17 11.5H7M11 7l-4.5 4.5L11 16" stroke="#fff" stroke-width="2" stroke-linecap="round" stroke-linejoin="round"/></svg><svg class="r" style="left:61px;top:9px;" width="19" height="17" viewBox="0 0 19 17" fill="none"><rect x="1.5" y="1.2" width="16" height="11" rx="1.8" stroke="#8a8a8a" stroke-width="1.3"/><path d="M1.5 5.5h16M7 1.5v4M9.5 12.5v3M6 15.8h7" stroke="#8a8a8a" stroke-width="1.3"/></svg><div class="r" style="left:96px;top:5px;width:24px;height:24px;background:#3db5e6;border-radius:5px"></div><svg class="r" style="left:96px;top:5px;" width="24" height="24" viewBox="0 0 24 24" fill="none"><path d="M14.5 5.5c2 1 2.5 3.5 2.5 6.5 0 3.5-1.8 6-5 6-2.2 0-3.8-1.3-3.8-3.4 0-1.7 1.2-2.7 2.6-2.7.8 0 1.3.3 1.6.6.3-2.5 1-5.6 2.1-7z" fill="#fff"/></svg><div class="t s5" style="left:132px;top:10.10px;font-size:15px;font-weight:400;color:#222;letter-spacing:0.457px;">App_60</div><svg class="r" style="left:198px;top:8px;" width="18" height="17" viewBox="0 0 18 17" fill="none"><path d="M3 14.5l.7-3.5 8.5-8.5a1.8 1.8 0 0 1 2.6 2.6l-8.5 8.5zM10.5 15.3h6" stroke="#666" stroke-width="1.4" stroke-linecap="round" stroke-linejoin="round"/></svg><div class="r" style="left:712px;top:3px;width:557px;height:29px;background:#fcfcfc;border:1px solid #e5e5e5;border-radius:5px"></div><svg class="r" style="left:723px;top:9px;" width="18" height="18" viewBox="0 0 18 18" fill="none"><circle cx="7.5" cy="7.5" r="5.8" stroke="#666" stroke-width="1.4"/><path d="M12 12l4.5 4.5" stroke="#666" stroke-width="1.4" stroke-linecap="round"/></svg><div class="t s" style="left:750.2px;top:10.10px;font-size:15px;font-weight:400;color:#ababab;letter-spacing:0.178px;">Search Controls, Queries, Connectors...</div><div class="r" style="left:1220px;top:7px;width:19px;height:20px;background:#fff;border:1px solid #e6e6e6;border-bottom:2px solid #b9b9b9;border-radius:4px"></div><div class="r" style="left:1242px;top:7px;width:19px;height:20px;background:#fff;border:1px solid #e6e6e6;border-bottom:2px solid #b9b9b9;border-radius:4px"></div><div class="t " style="left:1225px;top:12.04px;font-size:10px;font-weight:700;color:#6a6a6a;letter-spacing:0px;">&#8984;</div><div class="t " style="left:1247px;top:11.69px;font-size:11px;font-weight:700;color:#6a6a6a;letter-spacing:0px;">F</div><div class="r" style="left:1595px;top:0px;width:1px;height:40px;background:#ececec"></div><div class="r" style="left:1642px;top:0px;width:1px;height:40px;background:#ececec"></div><svg class="r" style="left:1608px;top:7px;" width="21" height="21" viewBox="0 0 21 21" fill="none"><path d="M8.73 3.11 L9.00 1.02 L12.00 1.02 L12.27 3.11 L14.47 4.02 L16.14 2.73 L18.27 4.86 L16.98 6.53 L17.89 8.73 L19.98 9.00 L19.98 12.00 L17.89 12.27 L16.98 14.47 L18.27 16.14 L16.14 18.27 L14.47 16.98 L12.27 17.89 L12.00 19.98 L9.00 19.98 L8.73 17.89 L6.53 16.98 L4.86 18.27 L2.73 16.14 L4.02 14.47 L3.11 12.27 L1.02 12.00 L1.02 9.00 L3.11 8.73 L4.02 6.53 L2.73 4.86 L4.86 2.73 L6.53 4.02Z" stroke="#333" stroke-width="1.1" stroke-linejoin="round"/><circle cx="10.5" cy="10.5" r="3.6" stroke="#222" stroke-width="2.8"/></svg><svg class="r" style="left:1651px;top:9px;" width="19" height="17" viewBox="0 0 19 17" fill="none"><path d="M1.5 15.5c1-5 4.5-8 10-8V11L17.5 6 11.5 1v3.5C5.5 5 2 9 1.5 15.5z" stroke="#444" stroke-width="1.3" stroke-linejoin="round"/></svg><div class="t s" style="left:1675.8px;top:10.10px;font-size:15px;font-weight:400;color:#555;letter-spacing:-0.057px;">Share</div><div class="r" style="left:1726px;top:0px;width:49px;height:40px;background:#25b863"></div><svg class="r" style="left:1740px;top:7px;" width="22" height="22" viewBox="0 0 22 22" fill="none"><path d="M5 3.5v15l12.5-7.5z" stroke="#fff" stroke-width="1.6" stroke-linejoin="round"/></svg><div class="r" style="left:1775px;top:0px;width:98px;height:40px;background:#fcfcfc"></div><svg class="r" style="left:1784px;top:9px;" width="20" height="19" viewBox="0 0 20 19" fill="none"><path d="M18.5 1L1 9.5l6 1.8 2.5 6.2 2-5zM18.5 1l-11.5 10.3M18.5 1L16 16.5l-4.5-4.5M7 11.3v6" stroke="#333" stroke-width="1.3" stroke-linejoin="round"/></svg><div class="t s" style="left:1810.7px;top:10.10px;font-size:15px;font-weight:400;color:#555;letter-spacing:0.517px;">Publish</div><div class="r" style="left:1873px;top:0px;width:47px;height:40px;background:#f3f3f3"></div><div class="r" style="left:1888px;top:8px;width:18px;height:18px;background:#22b45a;border-radius:50%"></div><svg class="r" style="left:1888px;top:8px;" width="18" height="18" viewBox="0 0 18 18" fill="none"><path d="M5.5 9.3l2.3 2.2 4.5-4.5" stroke="#fff" stroke-width="1.8" stroke-linecap="round" stroke-linejoin="round"/></svg><div class="r" style="left:0px;top:1052px;width:1920px;height:28px;background:#fcfcfc;border-top:1px solid #e8e8e8"></div><svg class="r" style="left:13px;top:1060px;" width="16" height="16" viewBox="0 0 16 16" fill="none"><path d="M8 1l1.2 1.8 2-.6.5 2 2 .5-.6 2L15 8l-1.8 1.2.6 2-2 .5-.5 2-2-.6L8 15l-1.2-1.8-2 .6-.5-2-2-.5.6-2L1 8l1.8-1.2-.6-2 2-.5.5-2 2 .6z" fill="#f2b36b"/><circle cx="8" cy="8" r="1.5" fill="#e5554e"/></svg><div class="r" style="left:47px;top:1052px;width:119px;height:28px;background:#27ad5f"></div><div class="t s5" style="left:56.8px;top:1061.30px;font-size:15px;font-weight:400;color:#fff;letter-spacing:0.832px;">Production</div><svg class="r" style="left:140px;top:1062px;" width="11" height="11" viewBox="0 0 11 11" fill="none"><path d="M2 4l3.5 3.5L9 4" stroke="#fff" stroke-width="1.8" stroke-linecap="round" stroke-linejoin="round"/></svg><svg class="r" style="left:177px;top:1059px;" width="17" height="17" viewBox="0 0 17 17" fill="none"><path d="M12 1.5L5.5 7.5 2.5 5 1 6v5l1.5 1 3-2.5 6.5 6L15.5 14V3z" fill="#38b6ea"/><path d="M12 5v7L7.5 8.5z" fill="#fcfcfc"/><path d="M1.5 6.5l3 2-3 2" stroke="#2b6fb0" stroke-width="1"/></svg><div class="t s" style="left:198.5px;top:1061.75px;font-size:14px;font-weight:400;color:#555;letter-spacing:-0.068px;">Open in VS Code</div><svg class="r" style="left:312px;top:1062px;" width="12" height="11" viewBox="0 0 12 11" fill="none"><path d="M2 3.5l4 4 4-4" stroke="#777" stroke-width="1.2" stroke-linecap="round" stroke-linejoin="round"/></svg><svg class="r" style="left:902px;top:1059px;" width="18" height="18" viewBox="0 0 18 18" fill="none"><path d="M6 3L2.5 6.5 6 10M2.5 6.5h8a4.5 4.5 0 0 1 0 9H7" stroke="#2db562" stroke-width="1.8" stroke-linecap="round" stroke-linejoin="round"/></svg><svg class="r" style="left:934px;top:1059px;" width="18" height="18" viewBox="0 0 18 18" fill="none"><path d="M12 3l3.5 3.5L12 10M15.5 6.5h-8a4.5 4.5 0 0 0 0 9H11" stroke="#333" stroke-width="1.8" stroke-linecap="round" stroke-linejoin="round"/></svg><div class="r" style="left:961px;top:1053px;width:32px;height:27px;background:#f2f2f2"></div><div class="r" style="left:993px;top:1053px;width:1px;height:27px;background:#ececec"></div><div class="r" style="left:1025px;top:1053px;width:1px;height:27px;background:#ececec"></div><svg class="r" style="left:967px;top:1059px;" width="20" height="16" viewBox="0 0 20 16" fill="none"><rect x="2.5" y="1.5" width="15" height="10.5" rx="1" stroke="#555" stroke-width="1.5"/><path d="M.5 13.8h19" stroke="#555" stroke-width="1.8" stroke-linecap="round"/></svg><svg class="r" style="left:1003px;top:1058px;" width="12" height="20" viewBox="0 0 12 20" fill="none"><rect x="1.5" y="1.5" width="9" height="17" rx="1.8" stroke="#444" stroke-width="1.5"/><path d="M1.5 15h9" stroke="#444" stroke-width="1.3"/><path d="M5 3.5h2" stroke="#444" stroke-width="1"/></svg><svg class="r" style="left:1768px;top:1059px;" width="20" height="18" viewBox="0 0 20 18" fill="none"><path d="M3.5 2l11 15" stroke="#f07a6a" stroke-width="1.2"/><path d="M13.5 3a1.6 1.6 0 0 1 2.3 2.3L7 14l-4 1.5 1.5-4z" stroke="#e5806a" stroke-width="1.2" stroke-linejoin="round"/></svg><svg class="r" style="left:1794px;top:1063px;" width="11" height="9" viewBox="0 0 11 9" fill="none"><path d="M2 2.5l3.5 3.5L9 2.5" stroke="#333" stroke-width="2" stroke-linecap="round" stroke-linejoin="round"/></svg><svg class="r" style="left:1819px;top:1062px;" width="18" height="12" viewBox="0 0 18 12" fill="none"><path d="M1 6c2-3 4.5-4.8 8-4.8S15 3 17 6c-2 3-4.5 4.8-8 4.8S3 9 1 6z" fill="#6a6a6a"/><circle cx="9" cy="6" r="3" fill="#fff"/><circle cx="9" cy="6" r="1.6" fill="#6a6a6a"/></svg><svg class="r" style="left:1852px;top:1059px;" width="18" height="18" viewBox="0 0 18 18" fill="none"><circle cx="9" cy="9" r="7.8" stroke="#777" stroke-width="1.2"/><path d="M6.8 7a2.3 2.3 0 1 1 3.2 2.1c-.6.3-1 .8-1 1.5v.6" stroke="#777" stroke-width="1.3" stroke-linecap="round"/><circle cx="9" cy="13.3" r=".8" fill="#777"/></svg><div class="r" style="left:1888px;top:1052px;width:32px;height:28px;background:linear-gradient(90deg,#f9796a,#fbaa6a)"></div><svg class="r" style="left:1893px;top:1057px;" width="20" height="20" viewBox="0 0 20 20" fill="none"><circle cx="10" cy="10" r="8.5" stroke="#fde0d4" stroke-width="1.2"/><path d="M5.5 11V9.5a4.5 4.5 0 0 1 9 0V11" stroke="#fde0d4" stroke-width="1.5"/><path d="M10 16c2 0 3.5-1 3.5-3" stroke="#fde0d4" stroke-width="1.2"/></svg>
</body></html>
